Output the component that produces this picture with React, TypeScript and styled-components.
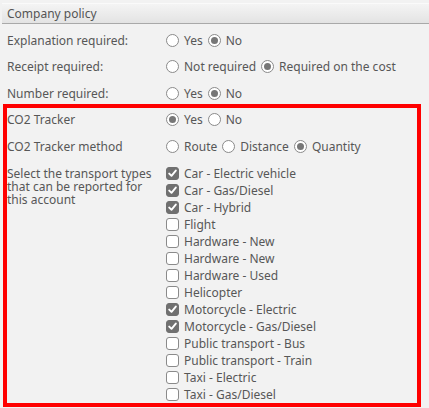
import styled, { createGlobalStyle } from 'styled-components'

const GlobalStyle = createGlobalStyle`
  html, body {
    margin: 0;
    padding: 0;
    background: #f2f2f2;
  }
  body {
    font-family: "Noto Sans", "Open Sans", Arial, sans-serif;
    font-size: 12px;
    color: #575757;
  }
`

const Page = styled.div`
  width: 429px;
  height: 408px;
  overflow: hidden;
  background: #f2f2f2;
  padding-top: 3px;
  box-sizing: border-box;
`

const Header = styled.div`
  margin-left: 2px;
  display: flex;
  align-items: center;
  padding-left: 5px;
  background: linear-gradient(#f4f4f4, #e3e3e3);
  border-top: 1px solid #fafafa;
  border-bottom: 1px solid #a9a9a9;
  box-sizing: border-box;
  height: 21px;
  font-size: 12px;
  color: #555;
`

const Body = styled.div`
  padding: 3px 0 0 7px;
`

const Row = styled.div`
  display: grid;
  grid-template-columns: 159px 1fr;
  align-items: center;
  height: 26.5px;
`

const Label = styled.div`
  font-size: 12px;
  line-height: 13px;
`

const Section = styled.div`
  position: relative;
  margin-left: -7px;
  padding-left: 7px;

  &::after {
    content: '';
    position: absolute;
    left: 3px;
    top: -3px;
    right: 8px;
    bottom: -4px;
    border: 4px solid #ff0000;
    pointer-events: none;
  }
`

const ListRow = styled.div`
  display: grid;
  grid-template-columns: 159px 1fr;
  align-items: start;
  padding-top: 5px;
`

const TypeLabel = styled.div`
  font-size: 12px;
  line-height: 13px;
  padding-top: 2px;
  width: 156px;
`

const Options = styled.div`
  display: flex;
  align-items: center;
  gap: 5px;
  font-size: 12px;
`

const Option = styled.label`
  display: flex;
  align-items: center;
  gap: 5px;
`

const RadioMark = styled.span<{ $on?: boolean }>`
  width: 13px;
  height: 13px;
  border-radius: 50%;
  border: 1px solid #8a8a8a;
  background: #fff;
  box-sizing: border-box;
  display: inline-flex;
  align-items: center;
  justify-content: center;

  &::after {
    content: '';
    width: 7px;
    height: 7px;
    border-radius: 50%;
    background: ${p => (p.$on ? '#777' : 'transparent')};
  }
`

const CheckList = styled.div`
  display: flex;
  flex-direction: column;
`

const CheckItem = styled.label`
  display: flex;
  align-items: center;
  gap: 5px;
  height: 17px;
  font-size: 12px;
`

const Box = styled.span<{ $on?: boolean }>`
  width: 13px;
  height: 13px;
  border-radius: 3px;
  box-sizing: border-box;
  border: 1px solid ${p => (p.$on ? '#707070' : '#8a8a8a')};
  background: ${p => (p.$on ? '#707070' : '#fff')};
  display: inline-flex;
  align-items: center;
  justify-content: center;
`

function Radio({ on, text }: { on?: boolean; text: string }) {
  return (
    <Option>
      <RadioMark $on={on} />
      {text}
    </Option>
  )
}

function Check({ on, text }: { on?: boolean; text: string }) {
  return (
    <CheckItem>
      <Box $on={on}>
        {on && (
          <svg width="9" height="9" viewBox="0 0 9 9">
            <path d="M1.2 4.6 L3.5 6.8 L7.8 1.6" stroke="#fff" strokeWidth="1.9" fill="none" strokeLinecap="round" strokeLinejoin="round" />
          </svg>
        )}
      </Box>
      {text}
    </CheckItem>
  )
}

const transports: [string, boolean][] = [
  ['Car - Electric vehicle', true],
  ['Car - Gas/Diesel', true],
  ['Car - Hybrid', true],
  ['Flight', false],
  ['Hardware - New', false],
  ['Hardware - New', false],
  ['Hardware - Used', false],
  ['Helicopter', false],
  ['Motorcycle - Electric', true],
  ['Motorcycle - Gas/Diesel', true],
  ['Public transport - Bus', false],
  ['Public transport - Train', false],
  ['Taxi - Electric', false],
  ['Taxi - Gas/Diesel', false],
]

export default function App() {
  return (
    <Page>
      <GlobalStyle />
      <Header>Company policy</Header>
      <Body>
        <Row>
          <Label>Explanation required:</Label>
          <Options>
            <Radio text="Yes" />
            <Radio text="No" on />
          </Options>
        </Row>
        <Row>
          <Label>Receipt required:</Label>
          <Options>
            <Radio text="Not required" />
            <Radio text="Required on the cost" on />
          </Options>
        </Row>
        <Row>
          <Label>Number required:</Label>
          <Options>
            <Radio text="Yes" />
            <Radio text="No" on />
          </Options>
        </Row>
        <Section>
          <Row>
            <Label>CO2 Tracker</Label>
            <Options>
              <Radio text="Yes" on />
              <Radio text="No" />
            </Options>
          </Row>
          <Row>
            <Label>CO2 Tracker method</Label>
            <Options>
              <Radio text="Route" />
              <Radio text="Distance" />
              <Radio text="Quantity" on />
            </Options>
          </Row>
          <ListRow>
            <TypeLabel>Select the transport types that can be reported for this account</TypeLabel>
            <CheckList>
              {transports.map(([t, on], i) => (
                <Check key={i} text={t} on={on} />
              ))}
            </CheckList>
          </ListRow>
        </Section>
      </Body>
    </Page>
  )
}
